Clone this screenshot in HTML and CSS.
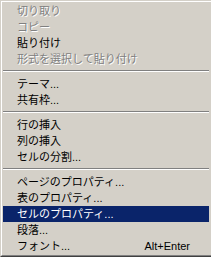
FILE: index.html
```html
<!DOCTYPE html>
<html lang="ja">
<head>
    <meta charset="UTF-8">
    <title>コンテキストメニュー</title>
    <link rel="stylesheet" href="styles.css">
</head>
<body>

    <div class="menu">
        <div class="menu-inner">
            <!-- Clipboard -->
            <div class="item disabled">切り取り</div>
            <div class="item disabled">コピー</div>
            <div class="item">貼り付け</div>
            <div class="item disabled">形式を選択して貼り付け</div>
            <div class="sep"></div>

            <!-- Theme / frames -->
            <div class="item">テーマ...</div>
            <div class="item">共有枠...</div>
            <div class="sep"></div>

            <!-- Table editing -->
            <div class="item">行の挿入</div>
            <div class="item">列の挿入</div>
            <div class="item">セルの分割...</div>
            <div class="sep"></div>

            <!-- Properties -->
            <div class="item">ページのプロパティ...</div>
            <div class="item">表のプロパティ...</div>
            <div class="item selected">セルのプロパティ...</div>
            <div class="item">段落...</div>
            <div class="item">フォント...<span class="shortcut">Alt+Enter</span></div>
        </div>
    </div>

</body>
</html>
```

FILE: styles.css
```css
/* General Styling */
html, body {
    margin: 0;
    padding: 0;
    background: #d4d0c8;
    overflow: hidden;
}
body {
    font-family: "Liberation Sans", "Noto Sans CJK JP", sans-serif;
    font-size: 11px;
    color: #000;
}
/* Menu frame (classic 3D border, right side cut off) */
.menu {
    width: 211px;
    box-sizing: border-box;
    border-top: 1px solid #d4d0c8;
    border-left: 1px solid #d4d0c8;
    border-bottom: 1px solid #404040;
}
.menu-inner {
    border-top: 1px solid #fff;
    border-left: 1px solid #fff;
    border-bottom: 1px solid #808080;
    padding: 1px 2px 1px 1px;
}
/* Items */
.item {
    display: flex;
    justify-content: space-between;
    height: 16px;
    line-height: 16px;
    padding: 0 19px 0 14px;
    white-space: nowrap;
}
.item.disabled {
    color: #808080;
    text-shadow: 1px 1px 0 #fff;
}
.item.selected {
    background: #0a246a;
    color: #fff;
}
/* Separator */
.sep {
    padding: 3px 0 4px;
}
.sep::before {
    content: "";
    display: block;
    border-top: 1px solid #808080;
    border-bottom: 1px solid #fff;
}
```
